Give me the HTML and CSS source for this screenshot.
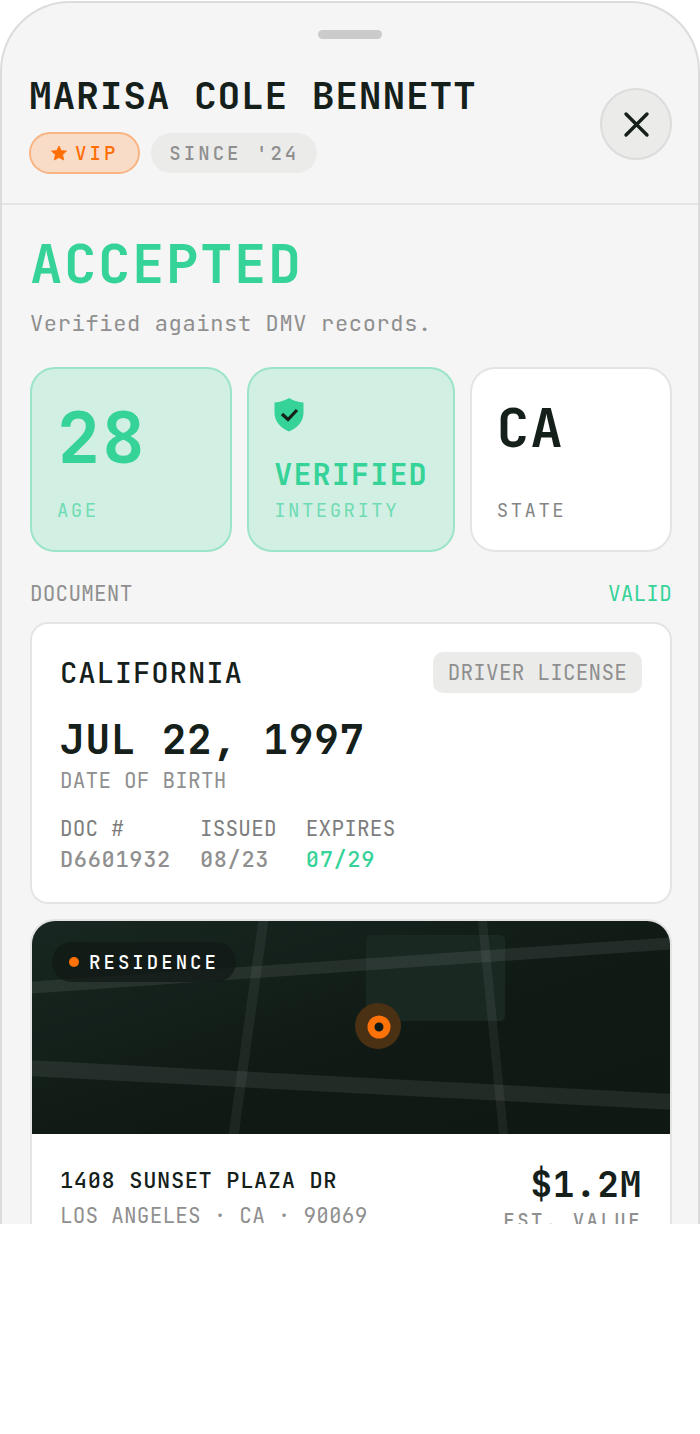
FILE: index.html
```
<!DOCTYPE html>
<html lang="en">
<head>
  <meta charset="UTF-8">
  <meta name="viewport" content="width=device-width, initial-scale=1">
  <title>ID Check</title>
  <link rel="stylesheet" href="styles.css">
</head>
<body>

  <main class="sheet">
    <div class="handle"></div>

    <header class="header">
      <div>
        <h1 class="name">MARISA COLE BENNETT</h1>
        <div class="chips">
          <span class="chip chip-vip">
            <svg width="16" height="16" viewBox="0 0 16 16" aria-hidden="true">
              <path d="M8 1l2.200 4.600 5.300.5-3.900 3.600 1.100 5.300L8 12.500 3.300 15l1.100-5.300L.5 6.100l5.300-.5z" fill="currentColor" stroke="currentColor" stroke-width=".8" stroke-linejoin="round"/>
            </svg>
            VIP
          </span>
          <span class="chip">SINCE '24</span>
        </div>
      </div>
      <button class="close" type="button" aria-label="Close">
        <svg width="28" height="28" viewBox="0 0 28 28" aria-hidden="true">
          <path d="M4 4l21 21M25 4L4 25" stroke="currentColor" stroke-width="3.400" stroke-linecap="round"/>
        </svg>
      </button>
    </header>

    <div class="content">
      <h2 class="result">ACCEPTED</h2>
      <p class="result-note">Verified against DMV records.</p>

      <section class="stats">
        <div class="stat stat-ok">
          <div class="stat-number">28</div>
          <div class="stat-label">AGE</div>
        </div>
        <div class="stat stat-ok">
          <svg class="shield" width="30" height="38" viewBox="0 0 30 38" aria-hidden="true">
            <path d="M15 3C11 5.500 6 7 .5 7.500v10c0 9 6 15.500 14.500 19 8.500-3.500 14.500-10 14.500-19v-10C24 7 19 5.500 15 3z" fill="#36d399"/>
            <path d="M8 19l6 5.500 9-9.500" fill="none" stroke="#15201b" stroke-width="3.200"/>
          </svg>
          <div class="stat-text">VERIFIED</div>
          <div class="stat-label">INTEGRITY</div>
        </div>
        <div class="stat">
          <div class="stat-code">CA</div>
          <div class="stat-label">STATE</div>
        </div>
      </section>

      <div class="section-head">
        <span>DOCUMENT</span>
        <span class="ok">VALID</span>
      </div>

      <section class="card document">
        <div class="document-head">
          <h3 class="issuer">CALIFORNIA</h3>
          <span class="tag">DRIVER LICENSE</span>
        </div>
        <div class="dob">JUL 22, 1997</div>
        <div class="caption">DATE OF BIRTH</div>
        <dl class="fields">
          <div>
            <dt>DOC #</dt>
            <dd>D6601932</dd>
          </div>
          <div>
            <dt>ISSUED</dt>
            <dd>08/23</dd>
          </div>
          <div>
            <dt>EXPIRES</dt>
            <dd class="ok">07/29</dd>
          </div>
        </dl>
      </section>

      <section class="card residence">
        <div class="map">
          <svg class="map-art" viewBox="0 0 640 213" preserveAspectRatio="xMidYMid slice" aria-hidden="true">
            <defs>
              <linearGradient id="ground" x1="0" y1="0" x2="1" y2="1">
                <stop offset="0" stop-color="#182721"/>
                <stop offset=".6" stop-color="#101914"/>
                <stop offset="1" stop-color="#0f1813"/>
              </linearGradient>
            </defs>
            <rect width="640" height="213" fill="url(#ground)"/>
            <rect x="335" y="14" width="139" height="86" rx="5" fill="#1a2822"/>
            <g stroke="#fff" stroke-opacity=".08">
              <path d="M-5 67L645 22" stroke-width="12"/>
              <path d="M-5 147L645 181" stroke-width="16"/>
              <path d="M233-5L202 218" stroke-width="10" stroke-opacity=".06"/>
              <path d="M451-5L473 218" stroke-width="9" stroke-opacity=".06"/>
            </g>
            <circle cx="347" cy="105" r="23" fill="#4a3114"/>
            <circle cx="348" cy="106" r="8" fill="#101914" stroke="#ff7209" stroke-width="7"/>
          </svg>
          <span class="map-label">RESIDENCE</span>
        </div>
        <div class="residence-body">
          <div>
            <div class="street">1408 SUNSET PLAZA DR</div>
            <div class="caption">LOS ANGELES · CA · 90069</div>
          </div>
          <div class="value">
            <div class="value-amount">$1.2M</div>
            <div class="value-label">EST. VALUE</div>
          </div>
        </div>
      </section>
    </div>
  </main>

</body>
</html>
```
FILE: styles.css
```
* {
  box-sizing: border-box;
}

body {
  margin: 0;
  background: #fff;
  color: #15201b;
  font-family: "JetBrains Mono", "DejaVu Sans Mono", monospace;
  font-feature-settings: "zero" 1;
}

h1, h2, h3, p, dl, dd {
  margin: 0;
}

.sheet {
  height: calc(100vh - 211px);
  margin-top: 1px;
  overflow: hidden;
  background: #f5f5f5;
  border: 2px solid #dcdcdc;
  border-bottom: none;
  border-radius: 70px 70px 0 0;
}

.handle {
  width: 64px;
  height: 9px;
  margin: 27px auto 35px;
  border-radius: 5px;
  background: #cbcbcb;
}

.header {
  display: flex;
  align-items: center;
  justify-content: space-between;
  padding: 0 26px 29px 27px;
  border-bottom: 2px solid #e4e4e4;
}

.name {
  margin-bottom: 16px;
  font-size: 38px;
  line-height: 42px;
  letter-spacing: 0.02em;
}

.chips {
  display: flex;
  align-items: center;
  gap: 11px;
}

.chip {
  display: flex;
  align-items: center;
  gap: 8px;
  height: 40px;
  padding: 0 18px;
  border-radius: 20px;
  background: #ebebea;
  color: #8f8f8f;
  font-size: 19px;
  font-weight: 500;
  letter-spacing: 0.16em;
}

.chip-vip {
  height: 42px;
  padding: 0 20px;
  border: 2px solid #f9b483;
  border-radius: 21px;
  background: #f9dcc8;
  color: #ff6d05;
}

.close {
  display: flex;
  align-items: center;
  justify-content: center;
  flex: none;
  width: 72px;
  height: 72px;
  padding: 0;
  border: 2px solid #dcdcdc;
  border-radius: 50%;
  background: #ebebea;
  color: #15201b;
}

.content {
  padding: 27px 26px 27px 28px;
}

.result {
  color: #36d399;
  font-size: 54px;
  line-height: 64px;
  letter-spacing: 0.03em;
}

.result-note {
  margin: 14px 0 29px;
  color: #8f8f8f;
  font-size: 22px;
  line-height: 28px;
  letter-spacing: 0.03em;
}

.ok {
  color: #36d399;
}

/* stat tiles */
.stats {
  display: grid;
  grid-template-columns: 1fr 1fr 1fr;
  gap: 15px;
}

.stat {
  display: flex;
  flex-direction: column;
  padding: 26px 25px;
  border: 2px solid #e4e4e4;
  border-radius: 25px;
  background: #fff;
}

.stat-ok {
  border-color: #9be4c8;
  background: #d2efe3;
  color: #36d399;
}

.stat-number {
  font-size: 72px;
  line-height: 86px;
  letter-spacing: 0.02em;
}

.stat-code {
  font-size: 54px;
  line-height: 66px;
  letter-spacing: 0.02em;
}

.stat-text {
  margin: 23px 0 6px;
  font-size: 30px;
  line-height: 36px;
  letter-spacing: 0.04em;
}

.stat-number,
.stat-code,
.stat-text {
  font-weight: bold;
}

.stat-label {
  margin-top: auto;
  color: #858585;
  font-size: 19px;
  line-height: 26px;
  letter-spacing: 0.13em;
}

.stat-ok .stat-label {
  color: #6fdcb4;
}

/* document */
.section-head {
  display: flex;
  justify-content: space-between;
  margin: 28px 0 14px;
  color: #8f8f8f;
  font-size: 21px;
  line-height: 28px;
  letter-spacing: 0.01em;
}

.section-head .ok {
  color: #36d399;
}

.card {
  border: 2px solid #e4e4e4;
  background: #fff;
}

.document {
  padding: 28px;
  border-radius: 18px;
}

.document-head {
  display: flex;
  align-items: center;
  justify-content: space-between;
  margin-bottom: 22px;
}

.issuer {
  font-size: 29px;
  font-weight: 500;
  letter-spacing: 0.03em;
}

.tag {
  padding: 0 15px;
  border-radius: 10px;
  background: #ebebea;
  color: #8f8f8f;
  font-size: 21px;
  line-height: 41px;
  letter-spacing: 0.01em;
}

.dob {
  margin-bottom: 4px;
  font-size: 41px;
  font-weight: bold;
  line-height: 48px;
  letter-spacing: 0.02em;
}

.caption {
  color: #8f8f8f;
  font-size: 21px;
  line-height: 28px;
  letter-spacing: 0.01em;
}

.fields {
  display: flex;
  gap: 29px;
  margin-top: 20px;
}

.fields dt {
  color: #7d7d7d;
  font-size: 21px;
  line-height: 28px;
  letter-spacing: 0.01em;
}

.fields dd {
  margin-top: 3px;
  color: #8f8f8f;
  font-size: 22px;
  font-weight: 500;
  line-height: 28px;
  letter-spacing: 0.03em;
}

.fields .ok {
  color: #36d399;
}

/* residence */
.residence {
  margin-top: 15px;
  overflow: hidden;
  border-radius: 25px;
}

.map {
  position: relative;
  height: 213px;
}

.map-art {
  display: block;
  width: 100%;
  height: 100%;
}

.map-label {
  position: absolute;
  top: 21px;
  left: 20px;
  display: flex;
  align-items: center;
  gap: 10px;
  height: 40px;
  padding: 0 17px;
  border-radius: 20px;
  background: rgba(18, 26, 22, 0.75);
  color: #fff;
  font-size: 19px;
  font-weight: 500;
  letter-spacing: 0.16em;
}

.map-label::before {
  content: "";
  width: 10px;
  height: 10px;
  border-radius: 50%;
  background: #ff7209;
}

.residence-body {
  display: flex;
  align-items: center;
  justify-content: space-between;
  padding: 28px;
}

.street {
  margin-bottom: 7px;
  font-size: 22px;
  font-weight: 500;
  line-height: 28px;
  letter-spacing: 0.03em;
}

.value {
  text-align: right;
}

.value-amount {
  margin-bottom: 2px;
  font-size: 36px;
  font-weight: bold;
  line-height: 44px;
  letter-spacing: 0.02em;
}

.value-label {
  color: #8f8f8f;
  font-size: 19px;
  font-weight: 500;
  line-height: 26px;
  letter-spacing: 0.13em;
}
```
